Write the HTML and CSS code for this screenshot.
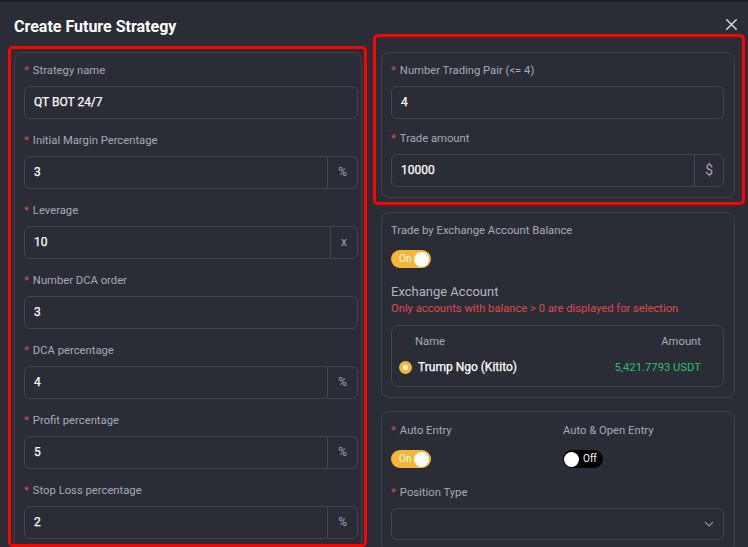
FILE: index.html
```html
<!DOCTYPE html>
<html lang="en">
<head>
<meta charset="utf-8">
<title>Create Future Strategy</title>
<link rel="stylesheet" href="styles.css">
</head>
<body>
<div class="topbar"></div>
<div class="modal">
  <div class="header">
    <h1 class="title">Create Future Strategy</h1>
    <svg class="close" viewBox="0 0 10 10" width="11" height="11"><path d="M0.7 0.7 L9.3 9.3 M9.3 0.7 L0.7 9.3" stroke="#d6d7db" stroke-width="1.4" fill="none" stroke-linecap="round"/></svg>
  </div>
  <div class="columns">
    <div class="card card-left">
      <div class="field">
        <div class="label"><span class="req">*</span>Strategy name</div>
        <div class="input"><span class="value">QT BOT 24/7</span></div>
      </div>
      <div class="field">
        <div class="label"><span class="req">*</span>Initial Margin Percentage</div>
        <div class="input"><span class="value">3</span><span class="addon">%</span></div>
      </div>
      <div class="field">
        <div class="label"><span class="req">*</span>Leverage</div>
        <div class="input"><span class="value">10</span><span class="addon">x</span></div>
      </div>
      <div class="field">
        <div class="label"><span class="req">*</span>Number DCA order</div>
        <div class="input"><span class="value">3</span></div>
      </div>
      <div class="field">
        <div class="label"><span class="req">*</span>DCA percentage</div>
        <div class="input"><span class="value">4</span><span class="addon">%</span></div>
      </div>
      <div class="field">
        <div class="label"><span class="req">*</span>Profit percentage</div>
        <div class="input"><span class="value">5</span><span class="addon">%</span></div>
      </div>
      <div class="field">
        <div class="label"><span class="req">*</span>Stop Loss percentage</div>
        <div class="input"><span class="value">2</span><span class="addon">%</span></div>
      </div>
    </div>

    <div class="col-right">
      <div class="card card-right">
        <div class="field field-r">
          <div class="label"><span class="req">*</span>Number Trading Pair (&lt;= 4)</div>
          <div class="input"><span class="value">4</span></div>
        </div>
        <div class="field field-r last">
          <div class="label"><span class="req">*</span>Trade amount</div>
          <div class="input"><span class="value">10000</span><span class="addon addon-big">$</span></div>
        </div>
      </div>

      <div class="card card-right">
        <div class="label">Trade by Exchange Account Balance</div>
        <div class="toggle on"><span class="toggle-text">On</span><span class="knob"></span></div>
        <div class="section-title">Exchange Account</div>
        <div class="warn">Only accounts with balance &gt; 0 are displayed for selection</div>
        <div class="table">
          <div class="thead"><span>Name</span><span>Amount</span></div>
          <div class="trow">
            <span class="radio"></span>
            <span class="acc-name">Trump Ngo (Kitito)</span>
            <span class="acc-amount">5,421.7793 USDT</span>
          </div>
        </div>
      </div>

      <div class="card card-right card-last">
        <div class="pair">
          <div>
            <div class="label"><span class="req">*</span>Auto Entry</div>
            <div class="toggle on"><span class="toggle-text">On</span><span class="knob"></span></div>
          </div>
          <div>
            <div class="label">Auto &amp; Open Entry</div>
            <div class="toggle off"><span class="knob"></span><span class="toggle-text">Off</span></div>
          </div>
        </div>
        <div class="label label-pos"><span class="req">*</span>Position Type</div>
        <div class="input select">
          <span class="value"></span>
          <svg class="chev" viewBox="0 0 10 6" width="10" height="6"><path d="M1 1 L5 5 L9 1" stroke="#8d909b" stroke-width="1.2" fill="none"/></svg>
        </div>
      </div>
    </div>
  </div>
  <div class="mark mark-left"></div>
  <div class="mark mark-right"></div>
</div>
</body>
</html>
```

FILE: styles.css
```css
* {
  box-sizing: border-box;
  margin: 0;
  padding: 0;
}

html,
body {
  background: #2b2d36;
}

body {
  width: 748px;
  height: 547px;
  overflow: hidden;
  font-family: Roboto, "Liberation Sans", sans-serif;
  color: #fff;
  position: relative;
}

.topbar {
  height: 2px;
  background: #1b1c21;
}

.modal {
  position: relative;
}

.header {
  display: flex;
  justify-content: space-between;
  align-items: flex-start;
  height: 50px;
  padding: 15px 11px 0 14px;
}

.title {
  font-size: 16px;
  line-height: 20px;
  font-weight: 700;
  color: #fff;
}

.close {
  display: block;
  margin-top: 2px;
}

.columns {
  display: grid;
  grid-template-columns: 348px 354px;
  column-gap: 19px;
  padding-left: 14px;
  align-items: start;
}

.card {
  border: 1px solid #3e414c;
  border-radius: 8px;
}

.card-left {
  padding: 9px 3px 10px 9px;
  height: 520px;
}

.card-right {
  padding: 9px 10px 10px 9px;
  margin-bottom: 13px;
}

.card-right:first-child {
  margin-bottom: 14px;
}

.card-last {
  padding-top: 10px;
}

.field {
  margin-bottom: 13px;
}

.field-r {
  margin-bottom: 11px;
}

.field.last {
  margin-bottom: 0;
}

.label {
  font-size: 11.25px;
  line-height: 16px;
  padding-top: 1px;
  height: 16px;
  color: #a7aab4;
  margin-bottom: 8px;
  white-space: nowrap;
}

.req {
  color: #e0474c;
  margin-right: 4px;
}

.input {
  display: flex;
  align-items: stretch;
  height: 33px;
  border: 1px solid #42454f;
  border-radius: 6px;
}

.value {
  flex: 1;
  padding-left: 9px;
  font-size: 12px;
  font-weight: 400;
  line-height: 31px;
  color: #fff;
  -webkit-text-stroke: 0.25px #fff;
}

.addon {
  border-left: 1px solid #42454f;
  padding: 0 10px;
  font-size: 12px;
  line-height: 31px;
  color: #9da0ab;
}

.addon-big {
  font-size: 14px;
}

.toggle {
  display: flex;
  align-items: center;
  width: 40px;
  height: 18px;
  border-radius: 9px;
  margin-top: 12px;
  padding: 0 2px;
}

.toggle.on {
  background: #f6b534;
  justify-content: space-between;
  padding-left: 8px;
}

.toggle.off {
  background: #000;
  gap: 4px;
  padding-left: 1px;
}

.toggle-text {
  font-size: 10px;
  line-height: 18px;
  color: #fff;
}

.knob {
  width: 15px;
  height: 15px;
  border-radius: 50%;
  background: #fff;
}

.section-title {
  margin-top: 14px;
  padding-top: 1px;
  height: 18px;
  font-size: 13px;
  line-height: 18px;
  color: #b3b6bf;
}

.warn {
  font-size: 11.2px;
  line-height: 16px;
  padding-top: 1px;
  height: 16px;
  color: #e0474c;
}

.table {
  margin-top: 9px;
  border: 1px solid #42454f;
  border-radius: 7px;
  padding: 7px 22px 10px 7px;
}

.thead {
  display: flex;
  justify-content: space-between;
  padding-left: 16px;
  padding-top: 1px;
  height: 16px;
  font-size: 11.25px;
  line-height: 16px;
  color: #a7aab4;
}

.trow {
  display: flex;
  align-items: center;
  margin-top: 9px;
  height: 18px;
}

.radio {
  width: 13px;
  height: 13px;
  border-radius: 50%;
  background: #f6b534;
  display: flex;
  align-items: center;
  justify-content: center;
  margin-right: 6px;
}

.radio::after {
  content: "";
  width: 5px;
  height: 5px;
  border-radius: 50%;
  background: #fff;
}

.acc-name {
  flex: 1;
  font-size: 12px;
  color: #fff;
  -webkit-text-stroke: 0.25px #fff;
}

.acc-amount {
  font-size: 11.25px;
  color: #2fbf6c;
}

.pair {
  display: grid;
  grid-template-columns: 172px 1fr;
}

.label-pos {
  margin-top: 16px;
}

.select {
  height: 32px;
  align-items: center;
  padding-right: 9px;
}

.mark {
  position: absolute;
  border: 3px solid #ff0000;
  border-radius: 5px;
  pointer-events: none;
}

.mark-left {
  left: 8px;
  top: 44px;
  width: 359px;
  height: 501px;
}

.mark-right {
  left: 373px;
  top: 32px;
  width: 372px;
  height: 171px;
}
```
